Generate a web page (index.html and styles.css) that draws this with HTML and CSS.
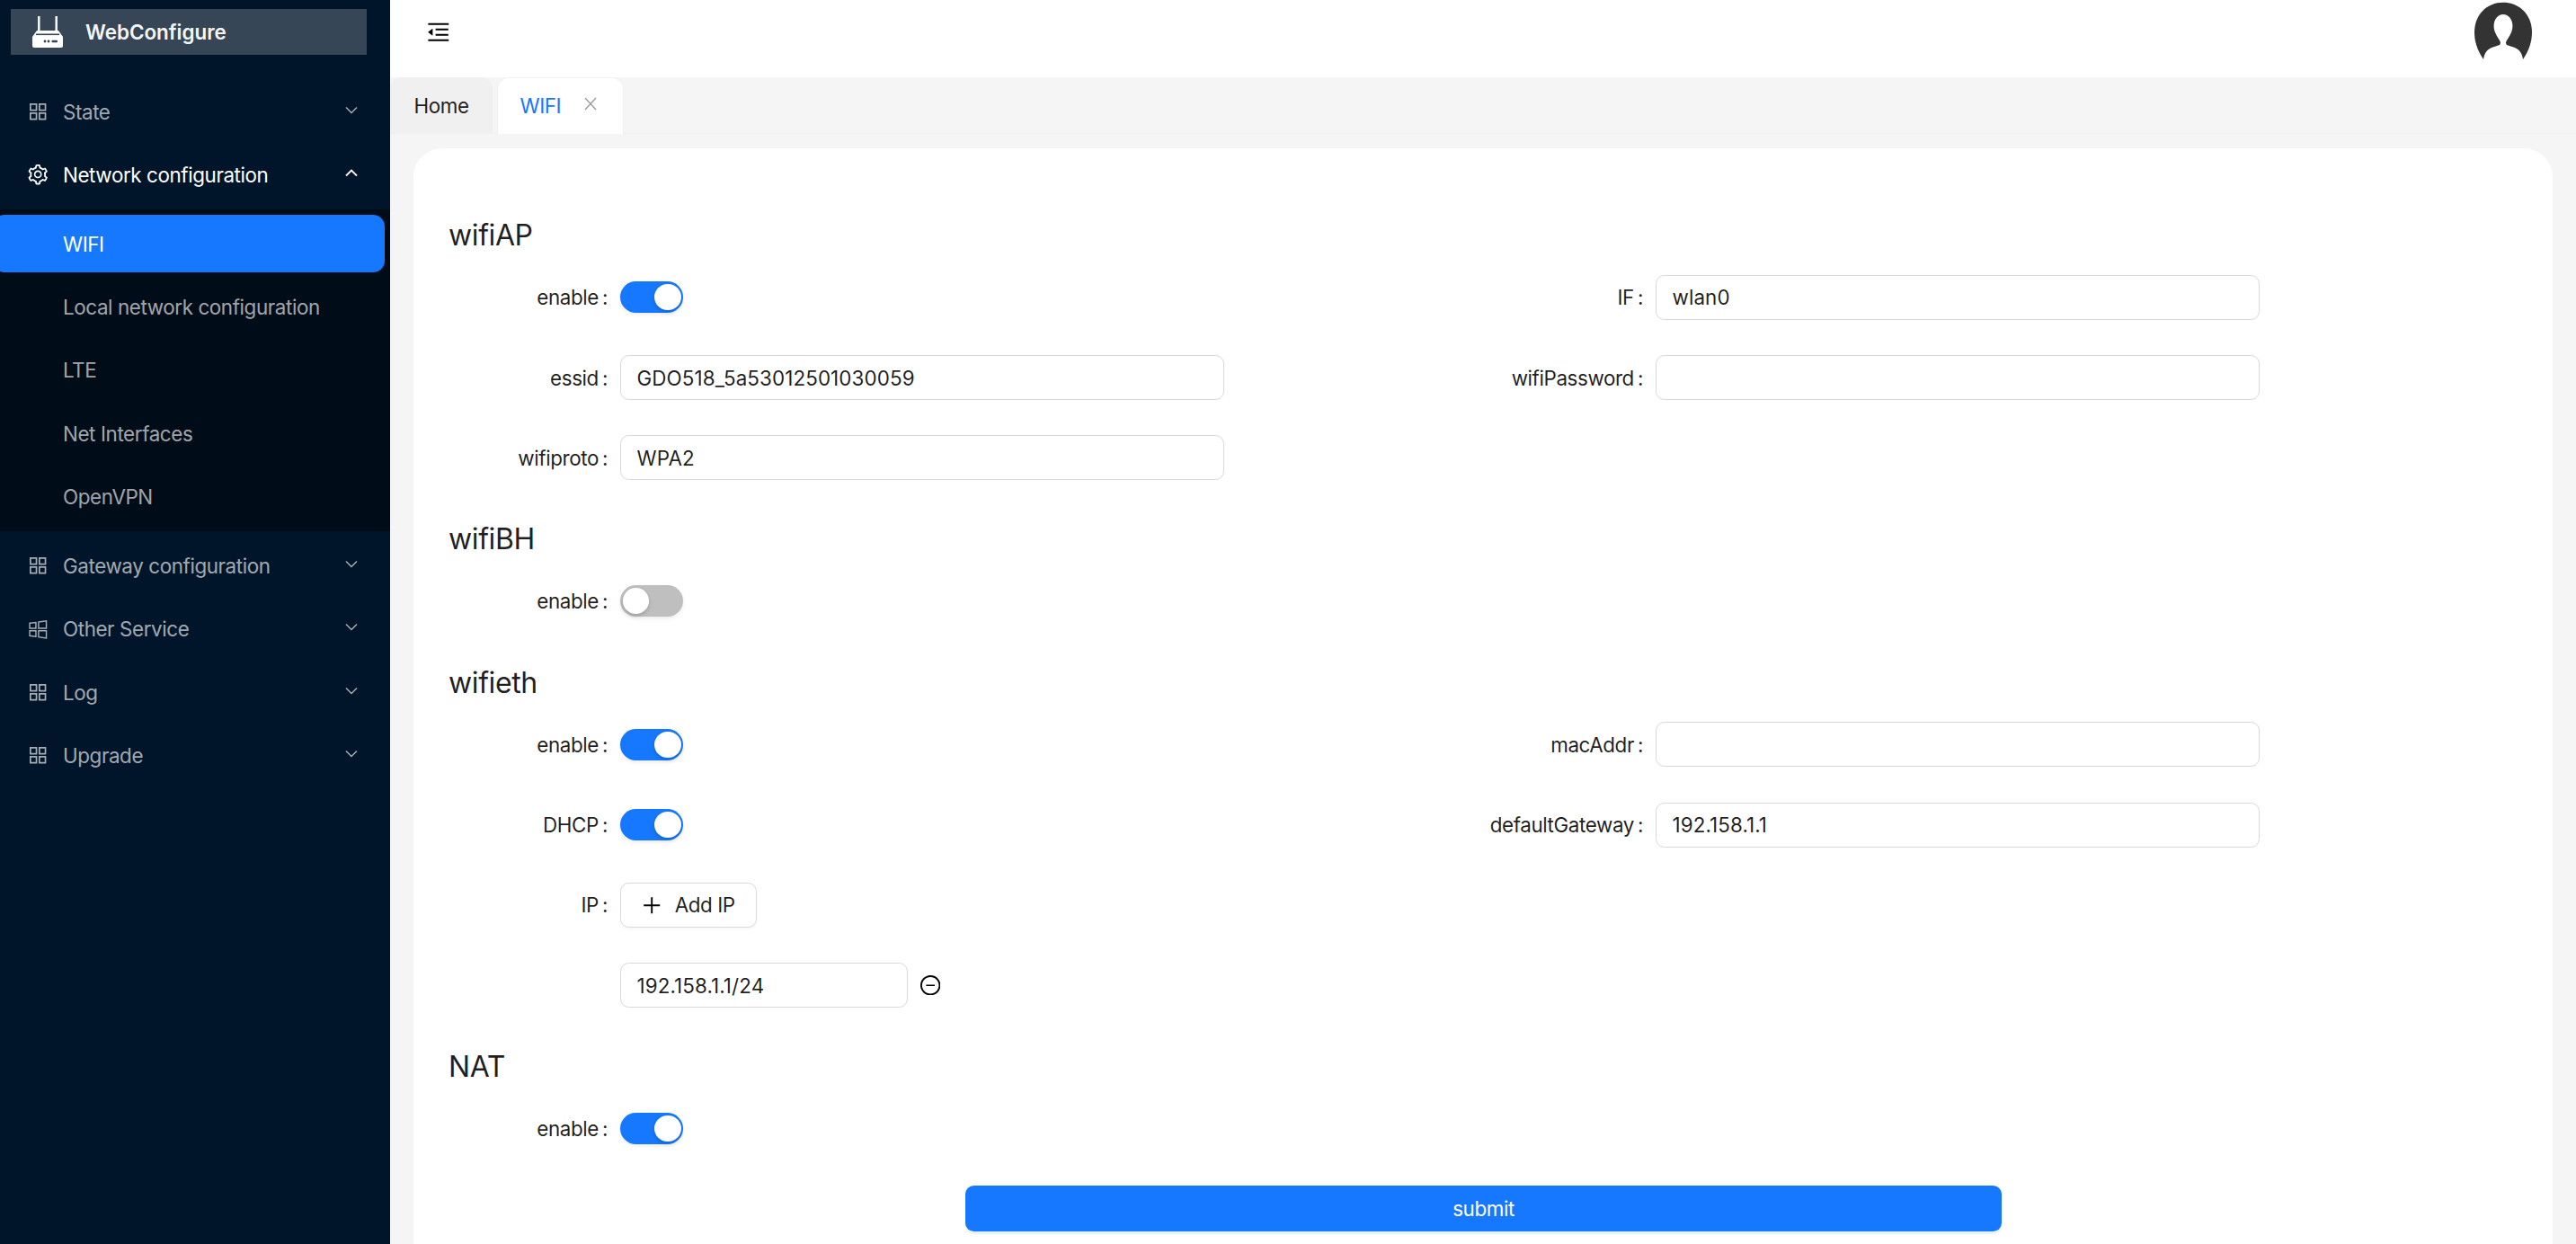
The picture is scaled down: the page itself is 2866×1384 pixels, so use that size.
FILE: index.html
```html
<!DOCTYPE html>
<html>
<head>
    <meta charset="UTF-8">
    <meta name="viewport" content="width=device-width, initial-scale=1.0">
    <title>WebConfigure</title>
    <link rel="stylesheet" href="styles.css">
</head>
<body>
    <svg class="icon-defs" width="0" height="0">
        <defs>
            <symbol id="i-app" viewBox="64 64 896 896"><path d="M464 144H160c-8.8 0-16 7.2-16 16v304c0 8.8 7.2 16 16 16h304c8.8 0 16-7.2 16-16V160c0-8.8-7.2-16-16-16zm-52 268H212V212h200v200zm452-268H560c-8.8 0-16 7.2-16 16v304c0 8.8 7.2 16 16 16h304c8.8 0 16-7.2 16-16V160c0-8.8-7.2-16-16-16zm-52 268H612V212h200v200zM464 544H160c-8.8 0-16 7.2-16 16v304c0 8.8 7.2 16 16 16h304c8.8 0 16-7.2 16-16V560c0-8.8-7.2-16-16-16zm-52 268H212V612h200v200zm452-268H560c-8.8 0-16 7.2-16 16v304c0 8.8 7.2 16 16 16h304c8.8 0 16-7.2 16-16V560c0-8.8-7.2-16-16-16zm-52 268H612V612h200v200z"/></symbol>
            <symbol id="i-down" viewBox="0 0 14 9"><path d="M1 1.5 7 7.5 13 1.5" fill="none" stroke="currentColor" stroke-width="1.5"/></symbol>
            <symbol id="i-up" viewBox="0 0 14 9"><path d="M1 7.5 7 1.5 13 7.5" fill="none" stroke="currentColor" stroke-width="1.8"/></symbol>
        </defs>
    </svg>

    <div class="layout">
        <aside class="sidebar">
            <div class="logo">
                <svg class="logo-icon" viewBox="0 0 34 35">
                    <path d="M7.300 0v17M26.700 0v17" fill="none" stroke="#fff" stroke-width="2.400"/>
                    <path d="M5 16H29L34 23V33a2 2 0 0 1-2 2H2a2 2 0 0 1-2-2V23z" fill="#fff"/>
                    <rect x="4" y="19.500" width="26" height="1.600" fill="#364656"/>
                    <circle cx="14" cy="28" r="1.400" fill="#364656"/>
                    <circle cx="18" cy="28" r="1.400" fill="#364656"/>
                    <rect x="21.500" y="26.700" width="6.500" height="2.600" rx="1" fill="#364656"/>
                </svg>
                <span class="logo-text">WebConfigure</span>
            </div>

            <nav class="menu">
                <div class="menu-item">
                    <svg class="menu-icon"><use href="#i-app"/></svg>
                    <span class="menu-label">State</span>
                    <svg class="menu-arrow"><use href="#i-down"/></svg>
                </div>
                <div class="menu-item open">
                    <svg class="menu-icon gear" viewBox="64 64 896 896"><path d="M924.8 625.7l-65.5-56c3.1-19 4.7-38.4 4.7-57.8s-1.6-38.8-4.7-57.8l65.5-56a32.03 32.03 0 0 0 9.3-35.2l-.9-2.6a443.74 443.74 0 0 0-79.7-137.9l-1.8-2.1a32.12 32.12 0 0 0-35.1-9.5l-81.3 28.9c-30-24.6-63.5-44-99.7-57.6l-15.7-85a32.05 32.05 0 0 0-25.8-25.7l-2.7-.5c-52.1-9.4-106.9-9.4-159 0l-2.7.5a32.05 32.05 0 0 0-25.8 25.7l-15.8 85.4a351.86 351.86 0 0 0-99 57.4l-81.9-29.1a32 32 0 0 0-35.1 9.5l-1.8 2.1a446.02 446.02 0 0 0-79.7 137.9l-.9 2.6c-4.5 12.5-.8 26.5 9.3 35.2l66.3 56.6c-3.1 18.8-4.6 38-4.6 57.1 0 19.2 1.5 38.4 4.6 57.1L99 625.5a32.03 32.03 0 0 0-9.3 35.2l.9 2.6c18.1 50.4 44.9 96.9 79.7 137.9l1.8 2.1a32.12 32.12 0 0 0 35.1 9.5l81.9-29.1c29.8 24.5 63.1 43.9 99 57.4l15.8 85.4a32.05 32.05 0 0 0 25.8 25.7l2.7.5a449.4 449.4 0 0 0 159 0l2.7-.5a32.05 32.05 0 0 0 25.8-25.7l15.7-85a350 350 0 0 0 99.7-57.6l81.3 28.9a32 32 0 0 0 35.1-9.5l1.8-2.1c34.8-41.1 61.6-87.5 79.7-137.9l.9-2.6c4.5-12.3.8-26.3-9.3-35zM788.3 465.9c2.5 15.1 3.8 30.6 3.8 46.1s-1.3 31-3.8 46.1l-6.6 40.1 74.7 63.9a370.03 370.03 0 0 1-42.6 73.6L721 702.8l-31.4 25.8c-23.9 19.6-50.5 35-79.3 45.8l-38.1 14.3-17.9 97a377.5 377.5 0 0 1-85 0l-17.9-97.2-37.8-14.5c-28.5-10.8-55-26.2-78.7-45.7l-31.4-25.9-93.4 33.2c-17-22.9-31.2-47.6-42.6-73.6l75.5-64.5-6.5-40c-2.4-14.9-3.7-30.3-3.7-45.5 0-15.3 1.2-30.6 3.7-45.5l6.5-40-75.5-64.5c11.3-26.1 25.6-50.7 42.6-73.6l93.4 33.2 31.4-25.9c23.7-19.5 50.2-34.9 78.7-45.7l37.9-14.3 17.9-97.2c28.1-3.2 56.8-3.2 85 0l17.9 97 38.1 14.3c28.7 10.8 55.4 26.2 79.3 45.8l31.4 25.8 92.8-32.9c17 22.9 31.2 47.6 42.6 73.6L781.8 426l6.5 39.9zM512 326c-97.2 0-176 78.8-176 176s78.8 176 176 176 176-78.8 176-176-78.8-176-176-176zm79.2 255.2A111.6 111.6 0 0 1 512 614c-29.9 0-58-11.7-79.2-32.8A111.6 111.6 0 0 1 400 502c0-29.9 11.7-58 32.8-79.2C454 401.6 482.1 390 512 390c29.9 0 58 11.6 79.2 32.8A111.6 111.6 0 0 1 624 502c0 29.9-11.7 58-32.8 79.2z"/></svg>
                    <span class="menu-label">Network configuration</span>
                    <svg class="menu-arrow"><use href="#i-up"/></svg>
                </div>
                <div class="submenu">
                    <div class="menu-item sub active"><span class="menu-label">WIFI</span></div>
                    <div class="menu-item sub"><span class="menu-label">Local network configuration</span></div>
                    <div class="menu-item sub"><span class="menu-label">LTE</span></div>
                    <div class="menu-item sub"><span class="menu-label">Net Interfaces</span></div>
                    <div class="menu-item sub"><span class="menu-label">OpenVPN</span></div>
                </div>
                <div class="menu-item">
                    <svg class="menu-icon"><use href="#i-app"/></svg>
                    <span class="menu-label">Gateway configuration</span>
                    <svg class="menu-arrow"><use href="#i-down"/></svg>
                </div>
                <div class="menu-item">
                    <svg class="menu-icon" viewBox="0 0 22 22"><path d="M2 4.200 8.800 3.400V9.800H2zM2 12.600H8.800V18.800L2 18zM11.700 3 20.200 1.800V9.800H11.700zM11.700 12.600H20.200V20.600L11.700 19.400z" fill="none" stroke="currentColor" stroke-width="1.400"/></svg>
                    <span class="menu-label">Other Service</span>
                    <svg class="menu-arrow"><use href="#i-down"/></svg>
                </div>
                <div class="menu-item">
                    <svg class="menu-icon"><use href="#i-app"/></svg>
                    <span class="menu-label">Log</span>
                    <svg class="menu-arrow"><use href="#i-down"/></svg>
                </div>
                <div class="menu-item">
                    <svg class="menu-icon"><use href="#i-app"/></svg>
                    <span class="menu-label">Upgrade</span>
                    <svg class="menu-arrow"><use href="#i-down"/></svg>
                </div>
            </nav>
        </aside>

        <div class="main">
            <header class="topbar">
                <svg class="fold-icon" viewBox="64 64 896 896"><path d="M408 442h480c4.4 0 8-3.6 8-8v-56c0-4.4-3.6-8-8-8H408c-4.4 0-8 3.6-8 8v56c0 4.4 3.6 8 8 8zm-8 204c0 4.4 3.6 8 8 8h480c4.4 0 8-3.6 8-8v-56c0-4.4-3.6-8-8-8H408c-4.4 0-8 3.6-8 8v56zm504-486H120c-4.4 0-8 3.6-8 8v56c0 4.4 3.6 8 8 8h784c4.4 0 8-3.6 8-8v-56c0-4.4-3.6-8-8-8zm0 632H120c-4.4 0-8 3.6-8 8v56c0 4.4 3.6 8 8 8h784c4.4 0 8-3.6 8-8v-56c0-4.4-3.6-8-8-8zM115.4 518.9L271.7 642c5.8 4.6 14.4.5 14.4-6.9V388.9c0-7.4-8.500-11.500-14.400-6.900L115.400 505.100a8.740 8.740 0 0 0 0 13.800z"/></svg>
                <svg class="avatar" viewBox="0 0 64 68">
                    <path d="M10.500 66.700C3 56 0 46 0 36 0 16 14 2.700 32 2.700 50 2.700 64 16 64 36 64 46 61 56 53.500 66.700z" fill="#333"/>
                    <path d="M10 68C10 60 14 54 22 52 27 50.500 29 50 29 47.500 29 45.500 25 41 23 36 19 26 24 16 32 16 40 16 45 26 41 36 39 41 35 45.500 35 47.500 35 50 37 50.500 42 52 50 54 54 60 54 68z" fill="#fff"/>
                </svg>
            </header>

            <div class="tabs">
                <div class="tab">Home</div>
                <div class="tab current">
                    <span>WIFI</span>
                    <svg class="tab-close" viewBox="0 0 14 15"><path d="M1 1 13 14M13 1 1 14" fill="none" stroke="currentColor" stroke-width="1.300"/></svg>
                </div>
            </div>

            <main class="card">
                <h2 class="section-title">wifiAP</h2>
                <div class="form-grid">
                    <div class="field">
                        <label class="field-label">enable<i>:</i></label>
                        <span class="switch on"></span>
                    </div>
                    <div class="field">
                        <label class="field-label">IF<i>:</i></label>
                        <div class="input">wlan0</div>
                    </div>
                    <div class="field">
                        <label class="field-label">essid<i>:</i></label>
                        <div class="input">GDO518_5a53012501030059</div>
                    </div>
                    <div class="field">
                        <label class="field-label">wifiPassword<i>:</i></label>
                        <div class="input"></div>
                    </div>
                    <div class="field">
                        <label class="field-label">wifiproto<i>:</i></label>
                        <div class="input">WPA2</div>
                    </div>
                </div>

                <h2 class="section-title">wifiBH</h2>
                <div class="form-grid">
                    <div class="field">
                        <label class="field-label">enable<i>:</i></label>
                        <span class="switch"></span>
                    </div>
                </div>

                <h2 class="section-title">wifieth</h2>
                <div class="form-grid">
                    <div class="field">
                        <label class="field-label">enable<i>:</i></label>
                        <span class="switch on"></span>
                    </div>
                    <div class="field">
                        <label class="field-label">macAddr<i>:</i></label>
                        <div class="input"></div>
                    </div>
                    <div class="field">
                        <label class="field-label">DHCP<i>:</i></label>
                        <span class="switch on"></span>
                    </div>
                    <div class="field">
                        <label class="field-label">defaultGateway<i>:</i></label>
                        <div class="input">192.158.1.1</div>
                    </div>
                    <div class="field">
                        <label class="field-label">IP<i>:</i></label>
                        <button class="add-button">
                            <svg class="plus-icon" viewBox="64 64 896 896"><path d="M482 152h60q8 0 8 8v704q0 8-8 8h-60q-8 0-8-8V160q0-8 8-8z"/><path d="M192 474h672q8 0 8 8v60q0 8-8 8H160q-8 0-8-8v-60q0-8 8-8z"/></svg>
                            Add IP
                        </button>
                    </div>
                    <div></div>
                    <div class="field">
                        <span></span>
                        <div class="ip-row">
                            <div class="input ip-input">192.158.1.1/24</div>
                            <svg class="minus-icon" viewBox="64 64 896 896"><path d="M696 480H328c-4.4 0-8 3.6-8 8v48c0 4.4 3.6 8 8 8h368c4.4 0 8-3.6 8-8v-48c0-4.4-3.6-8-8-8z"/><path d="M512 64C264.6 64 64 264.6 64 512s200.6 448 448 448 448-200.6 448-448S759.4 64 512 64zm0 820c-205.4 0-372-166.6-372-372s166.6-372 372-372 372 166.6 372 372-166.6 372-372 372z"/></svg>
                        </div>
                    </div>
                </div>

                <h2 class="section-title">NAT</h2>
                <div class="form-grid">
                    <div class="field">
                        <label class="field-label">enable<i>:</i></label>
                        <span class="switch on"></span>
                    </div>
                </div>

                <button class="submit-button">submit</button>
            </main>
        </div>
    </div>
</body>
</html>
```

FILE: styles.css
```css
* {
    box-sizing: border-box;
}

html, body {
    margin: 0;
    padding: 0;
    height: 100%;
    overflow: hidden;
}

body {
    font-family: 'Inter', 'Liberation Sans', sans-serif;
    font-size: 22.4px;
    letter-spacing: -0.4px;
    color: rgba(0, 0, 0, 0.88);
    background: #f5f5f5;
}

.icon-defs {
    position: absolute;
}

.layout {
    display: flex;
    height: 1384px;
}

/* sidebar */
.sidebar {
    width: 434px;
    flex-shrink: 0;
    background: #001529;
    overflow: hidden;
}

.logo {
    display: flex;
    align-items: center;
    height: 51px;
    margin: 10px 26px 0 12px;
    padding-left: 24px;
    background: #364656;
}

.logo-icon {
    width: 34px;
    height: 35px;
    margin-right: 25px;
}

.logo-text {
    font-weight: 600;
    letter-spacing: 0;
    color: #f3f7fb;
}

.menu {
    display: flex;
    flex-direction: column;
    gap: 6.4px;
    margin-top: 31px;
}

.menu-item {
    display: flex;
    align-items: center;
    height: 64px;
    padding: 0 36px 0 31px;
    color: rgba(255, 255, 255, 0.65);
}

.menu-item.open {
    color: #fff;
}

.menu-icon {
    width: 22.4px;
    height: 22.4px;
    margin-right: 16.6px;
    fill: currentColor;
}

.menu-label {
    flex: 1;
    white-space: nowrap;
}

.menu-arrow {
    width: 14px;
    height: 9px;
    margin-top: -4px;
}

.submenu {
    display: flex;
    flex-direction: column;
    gap: 6.4px;
    padding: 6.4px 0;
    background: #000c17;
}

.menu-item.sub {
    padding-left: 70px;
}

.menu-item.active {
    width: 436px;
    margin-left: -8px;
    padding-left: 78px;
    border-radius: 12.8px;
    background: #1677ff;
    color: #fff;
}

/* top bar and tabs */
.main {
    flex: 1;
    min-width: 0;
    display: flex;
    flex-direction: column;
}

.topbar {
    display: flex;
    justify-content: space-between;
    flex-shrink: 0;
    height: 86px;
    padding: 0 49px 0 41px;
    background: #fff;
}

.fold-icon {
    width: 25.6px;
    height: 25.6px;
    margin-top: 23px;
}

.avatar {
    width: 64px;
    height: 68px;
}

.tabs {
    display: flex;
    gap: 5px;
    flex-shrink: 0;
    height: 63px;
    border-bottom: 1.6px solid #f0f0f0;
}

.tab {
    display: flex;
    align-items: center;
    width: 114px;
    height: 63px;
    padding: 0 0 0 25.6px;
    border: 1.6px solid #f0f0f0;
    border-radius: 12.8px 12.8px 0 0;
    background: #f0f0f0;
}

.tab.current {
    gap: 26px;
    width: 141px;
    padding-left: 24.5px;
    border-bottom-color: #fff;
    background: #fff;
    color: #1677ff;
}

.tab-close {
    width: 14px;
    height: 15px;
    margin-top: -4px;
    color: #999;
}

/* form card */
.card {
    flex: 1;
    margin: 16px 26px 0 26px;
    padding: 70px 38px 0 39px;
    border-radius: 32px 32px 0 0;
    background: #fff;
    overflow: hidden;
}

.section-title {
    display: flex;
    align-items: center;
    height: 51.2px;
    margin: 0 0 19.2px;
    padding-top: 2px;
    font-size: 32px;
    font-weight: 400;
}

.form-grid {
    display: grid;
    grid-template-columns: 1152px 1fr;
    row-gap: 38px;
    margin-bottom: 38px;
}

.field {
    display: grid;
    grid-template-columns: 191px 672px;
    align-items: center;
    min-height: 51.2px;
}

.field-label {
    padding-right: 14px;
    text-align: right;
    white-space: nowrap;
}

.field-label i {
    margin-left: 4px;
    font-style: normal;
}

.input {
    display: flex;
    align-items: center;
    height: 50px;
    padding: 0 17.500px;
    border: 1.6px solid #d9d9d9;
    border-radius: 9.6px;
    background: #fff;
    letter-spacing: 0.1px;
}

.switch {
    position: relative;
    display: block;
    width: 70px;
    height: 35px;
    border-radius: 18px;
    background: #bfbfbf;
    box-shadow: 0 2px 4px rgba(0, 0, 0, 0.08);
}

.switch::after {
    content: '';
    position: absolute;
    top: 3px;
    left: 2.5px;
    width: 29.5px;
    height: 29px;
    border-radius: 50%;
    background: #fff;
    box-shadow: 0 2px 4px rgba(0, 35, 11, 0.2);
}

.switch.on {
    background: #1677ff;
}

.switch.on::after {
    left: 38px;
}

.add-button {
    display: flex;
    align-items: center;
    justify-content: center;
    gap: 14px;
    width: 152px;
    height: 50px;
    padding: 0;
    border: 1.6px solid #d9d9d9;
    border-radius: 9.6px;
    background: #fff;
    box-shadow: 0 3px 0 rgba(0, 0, 0, 0.02);
    font: inherit;
    letter-spacing: inherit;
    color: inherit;
}

.plus-icon {
    width: 22.4px;
    height: 22.4px;
}

.ip-row {
    display: flex;
    align-items: center;
    gap: 14px;
}

.ip-input {
    width: 320px;
}

.minus-icon {
    width: 22.4px;
    height: 22.4px;
}

.submit-button {
    display: block;
    width: 1153px;
    height: 50.7px;
    margin: 0 auto;
    padding: 0;
    border: none;
    border-radius: 9.6px;
    background: #1677ff;
    box-shadow: 0 3px 0 rgba(5, 145, 255, 0.1);
    font: inherit;
    letter-spacing: inherit;
    color: #fff;
}
```
